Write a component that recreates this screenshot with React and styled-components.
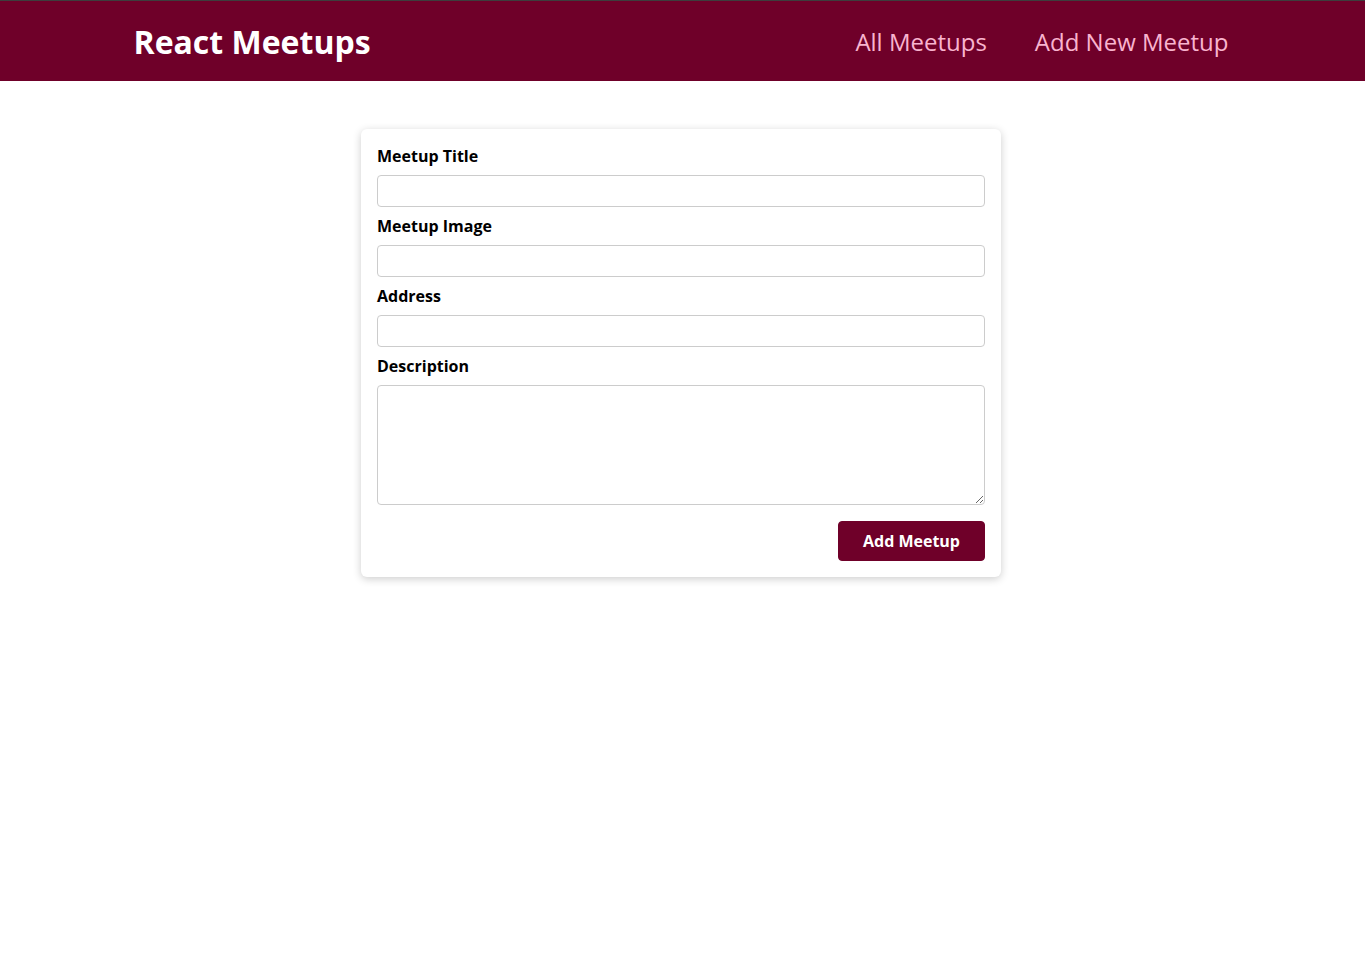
import React from "react";
import styled, { createGlobalStyle } from "styled-components";

const GlobalStyle = createGlobalStyle`
  * {
    box-sizing: border-box;
  }

  html {
    font-family: "Open Sans", "Noto Sans", sans-serif;
  }

  body {
    margin: 0;
    background-color: white;
  }
`;

const Header = styled.header`
  width: 100%;
  height: 81px;
  display: flex;
  align-items: center;
  justify-content: space-between;
  background-color: #6f0029;
  border-top: 1px solid #3d3d3d;
  padding: 0 10% 0 calc(10% - 3px);
`;

const Logo = styled.div`
  font-size: 2rem;
  color: white;
  font-weight: bold;
`;

const NavList = styled.ul`
  list-style: none;
  margin: 0;
  padding: 0;
  display: flex;
  align-items: baseline;
`;

const NavItem = styled.li`
  margin-left: 3rem;
`;

const NavLink = styled.a`
  text-decoration: none;
  font-size: 1.5rem;
  color: #f9b4cf;
  cursor: pointer;

  &:hover {
    color: white;
  }
`;

const Page = styled.div`
  padding-right: 3px;
`;

const Main = styled.main`
  margin: 3rem auto;
  width: 90%;
  max-width: 40rem;
`;

const Card = styled.div`
  background-color: white;
  border-radius: 6px;
  box-shadow: 0 2px 8px rgba(0, 0, 0, 0.2);
`;

const Form = styled.form`
  padding: 1rem;
`;

const Control = styled.div`
  margin-bottom: 0.5rem;
`;

const Label = styled.label`
  display: block;
  font-weight: bold;
  margin-bottom: 0.5rem;
`;

const Input = styled.input`
  display: block;
  font: inherit;
  padding: 0.25rem;
  border-radius: 4px;
  border: 1px solid #ccc;
  width: 100%;
  line-height: 22px;
`;

const TextArea = styled.textarea`
  display: block;
  font: inherit;
  padding: 0.25rem;
  border-radius: 4px;
  border: 1px solid #ccc;
  width: 100%;
  height: 120px;
`;

const Actions = styled.div`
  margin-top: 1rem;
  text-align: right;
`;

const Button = styled.button`
  font: inherit;
  cursor: pointer;
  background-color: #6f0029;
  color: white;
  padding: 0.5rem 1.5rem;
  border: 1px solid #6f0029;
  border-radius: 4px;
  font-weight: bold;
  line-height: 22px;
`;

const fields = [
  { id: "title", label: "Meetup Title", type: "text" },
  { id: "image", label: "Meetup Image", type: "url" },
  { id: "address", label: "Address", type: "text" },
];

const App = () => {
  return (
    <>
      <GlobalStyle />
      <Header>
        <Logo>React Meetups</Logo>
        <nav>
          <NavList>
            <NavItem>
              <NavLink>All Meetups</NavLink>
            </NavItem>
            <NavItem>
              <NavLink>Add New Meetup</NavLink>
            </NavItem>
          </NavList>
        </nav>
      </Header>
      <Page>
        <Main>
          <Card>
            <Form onSubmit={(e) => e.preventDefault()}>
              {fields.map((field) => (
                <Control key={field.id}>
                  <Label htmlFor={field.id}>{field.label}</Label>
                  <Input type={field.type} id={field.id} />
                </Control>
              ))}
              <Control>
                <Label htmlFor="description">Description</Label>
                <TextArea id="description" rows="5" />
              </Control>
              <Actions>
                <Button>Add Meetup</Button>
              </Actions>
            </Form>
          </Card>
        </Main>
      </Page>
    </>
  );
};

export default App;
